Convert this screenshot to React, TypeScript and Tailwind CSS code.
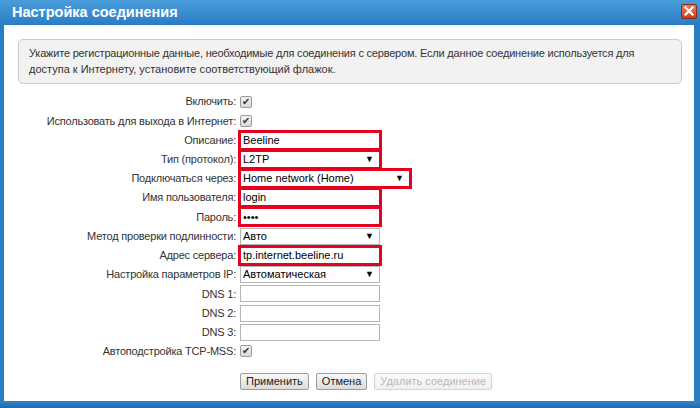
import React from "react";

type Row = {
  label: string;
  kind: "check" | "text" | "select" | "empty";
  value?: string;
  wide?: boolean;
  mark?: boolean;
};

const rows: Row[] = [
  { label: "Включить:", kind: "check" },
  { label: "Использовать для выхода в Интернет:", kind: "check" },
  { label: "Описание:", kind: "text", value: "Beeline", mark: true },
  { label: "Тип (протокол):", kind: "select", value: "L2TP", mark: true },
  { label: "Подключаться через:", kind: "select", value: "Home network (Home)", wide: true, mark: true },
  { label: "Имя пользователя:", kind: "text", value: "login", mark: true },
  { label: "Пароль:", kind: "text", value: "••••", mark: true },
  { label: "Метод проверки подлинности:", kind: "select", value: "Авто" },
  { label: "Адрес сервера:", kind: "text", value: "tp.internet.beeline.ru", mark: true },
  { label: "Настройка параметров IP:", kind: "select", value: "Автоматическая" },
  { label: "DNS 1:", kind: "empty" },
  { label: "DNS 2:", kind: "empty" },
  { label: "DNS 3:", kind: "empty" },
  { label: "Автоподстройка TCP-MSS:", kind: "check" },
];

function Check() {
  return (
    <div className="w-[12px] h-[12px] rounded-[2px] border border-[#9a9a9a] bg-gradient-to-b from-[#f4f4f4] to-[#d8d8d8] flex items-center justify-center text-[10px] leading-none text-[#333]">
      ✔
    </div>
  );
}

function Field({ row }: { row: Row }) {
  const mark = row.mark ? "outline-3 outline-solid outline-[#e8001f] outline-offset-[-1px]" : "";
  if (row.kind === "check") return <Check />;
  return (
    <div
      className={`h-[17px] ${row.wide ? "w-[170px]" : "w-[140px]"} border border-[#b5b5b5] bg-white flex items-center pl-[2px] pr-[5px] text-[11px] text-black ${mark}`}
    >
      <span className="flex-1 truncate">{row.value ?? ""}</span>
      {row.kind === "select" && <span className="text-[9px] leading-none text-black">▼</span>}
    </div>
  );
}

function Btn({ children, disabled }: { children: React.ReactNode; disabled?: boolean }) {
  return (
    <div
      className={`h-[17px] px-[5px] flex items-center border rounded-[2px] text-[11px] bg-gradient-to-b ${
        disabled
          ? "border-[#d4d4d4] from-[#fbfbfb] to-[#f0f0f0] text-[#b8b8b8]"
          : "border-[#9c9c9c] from-[#f8f8f8] to-[#dcdcdc] text-[#222]"
      }`}
    >
      {children}
    </div>
  );
}

export default function App() {
  return (
    <div
      className="w-[700px] h-[408px] flex flex-col bg-[#2a7dc3] overflow-hidden"
      style={{ fontFamily: '"Liberation Sans", Arial, sans-serif' }}
    >
      <div className="h-[25px] flex items-center justify-between pl-[12px] pr-[3px] bg-gradient-to-b from-[#4a9ddb] to-[#2a7dc4]">
        <span className="text-white font-bold text-[14.5px]">Настройка соединения</span>
        <div className="w-[16px] h-[15px] rounded-[2px] border border-[#8a2a14] bg-gradient-to-b from-[#ee7a55] to-[#c8401e] flex items-center justify-center mb-[3px]">
          <svg width="10" height="10" viewBox="0 0 10 10">
            <path d="M1.5 1.5 L8.5 8.5 M8.5 1.5 L1.5 8.5" stroke="white" strokeWidth="2.2" strokeLinecap="square" />
          </svg>
        </div>
      </div>

      <div className="flex-1 flex pl-[4px] pr-[6px]">
        <div className="flex-1 bg-white flex flex-col pt-[14px] pl-[14px] pr-[12px] text-[#333]">
          <div className="h-[45px] rounded-[5px] border border-[#cbcbcb] bg-[#f2f2f2] px-[10px] flex flex-col justify-center text-[11px] leading-[15.5px] text-[#333] whitespace-nowrap">
            <div className="tracking-[-0.2px]">
              Укажите регистрационные данные, необходимые для соединения с сервером. Если данное соединение используется для
            </div>
            <div>доступа к Интернету, установите соответствующий флажок.</div>
          </div>

          <div className="flex flex-col mt-[8px] -ml-[14px]">
            {rows.map((r) => (
              <div key={r.label} className="h-[19.23px] flex items-center">
                <div className="w-[233px] text-right text-[11px] tracking-[-0.2px] text-[#333] pr-[1px]">{r.label}</div>
                <div className="ml-[3px]">
                  <Field row={r} />
                </div>
              </div>
            ))}
          </div>

          <div className="flex gap-[7px] mt-[12px] ml-[222px]">
            <Btn>Применить</Btn>
            <Btn>Отмена</Btn>
            <Btn disabled>Удалить соединение</Btn>
          </div>
        </div>
      </div>
      <div className="h-[7px] bg-gradient-to-b from-[#2f86cc] to-[#1f68ad]" />
    </div>
  );
}
